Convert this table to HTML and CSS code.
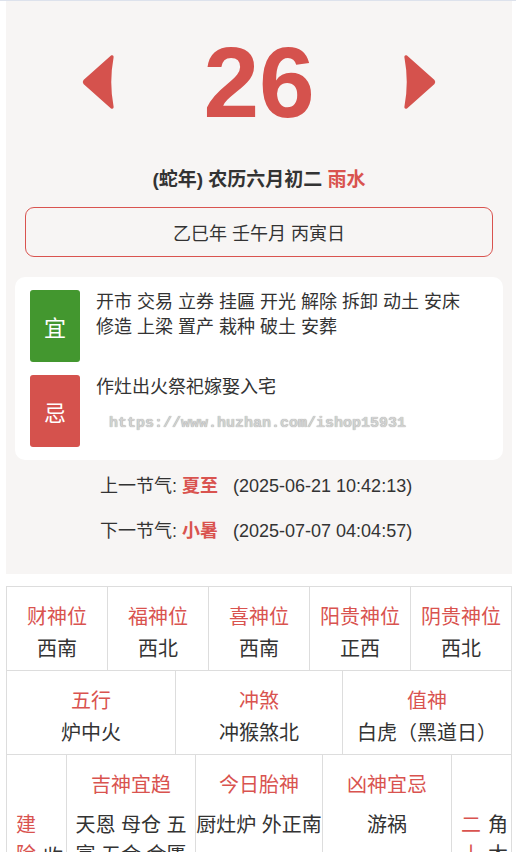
FILE: index.html
```html
<!DOCTYPE html>
<html lang="zh-CN">
<head>
<meta charset="utf-8">
<title>黄历</title>
<link rel="stylesheet" href="styles.css">
</head>
<body>
<div class="topbar"></div>
<main class="page">
  <section class="day-card">
    <div class="day-row">
      <svg class="arrow" viewBox="0 0 32 56" width="32" height="56"><path d="M29 1.5 C31 0.5 32 2 31.5 4 Q27 28 31.5 52 C32 54 31 55.5 29 54.5 L1.5 30 Q0 28 1.5 26 Z"/></svg>
      <div class="day-num">26</div>
      <svg class="arrow" viewBox="0 0 32 56" width="32" height="56"><path d="M3 1.5 C1 0.5 0 2 0.5 4 Q5 28 0.5 52 C0 54 1 55.5 3 54.5 L30.5 30 Q32 28 30.5 26 Z"/></svg>
    </div>
    <div class="lunar">(蛇年) 农历六月初二 <span class="red">雨水</span></div>
    <div class="ganzhi">乙巳年 壬午月 丙寅日</div>
    <div class="yiji">
      <div class="yj-row">
        <div class="yj-tag yi">宜</div>
        <div class="yj-text">开市 交易 立券 挂匾 开光 解除 拆卸 动土 安床 修造 上梁 置产 栽种 破土 安葬</div>
      </div>
      <div class="yj-row">
        <div class="yj-tag ji">忌</div>
        <div class="yj-text">作灶出火祭祀嫁娶入宅<div class="wm">https://www.huzhan.com/ishop15931</div></div>
      </div>
    </div>
    <div class="jieqi">
      <p>上一节气: <b>夏至</b><span class="time">(2025-06-21 10:42:13)</span></p>
      <p>下一节气: <b>小暑</b><span class="time">(2025-07-07 04:04:57)</span></p>
    </div>
  </section>

  <section class="info">
    <div class="row r5">
      <div class="cell"><div class="hd">财神位</div><div class="val">西南</div></div>
      <div class="cell"><div class="hd">福神位</div><div class="val">西北</div></div>
      <div class="cell"><div class="hd">喜神位</div><div class="val">西南</div></div>
      <div class="cell"><div class="hd">阳贵神位</div><div class="val">正西</div></div>
      <div class="cell"><div class="hd">阴贵神位</div><div class="val">西北</div></div>
    </div>
    <div class="row r3">
      <div class="cell"><div class="hd">五行</div><div class="val">炉中火</div></div>
      <div class="cell"><div class="hd">冲煞</div><div class="val">冲猴煞北</div></div>
      <div class="cell"><div class="hd">值神</div><div class="val">白虎（黑道日）</div></div>
    </div>
    <div class="row rlast">
      <div class="cell vcell">
        <span class="vcol red">建除十二神</span><span class="vcol low">收日</span>
      </div>
      <div class="cell tall"><div class="hd">吉神宜趋</div><div class="val2">天恩 母仓 五富 五合 金匮</div></div>
      <div class="cell tall"><div class="hd">今日胎神</div><div class="val2 tight">厨灶炉 外正南</div></div>
      <div class="cell tall"><div class="hd">凶神宜忌</div><div class="val2">游祸</div></div>
      <div class="cell vcell">
        <span class="vcol red">二十八宿</span><span class="vcol">角木蛟</span>
      </div>
    </div>
  </section>
</main>
</body>
</html>
```

FILE: styles.css
```css
* { box-sizing: border-box; }

html, body {
  margin: 0;
  padding: 0;
  background: #ffffff;
  color: #333333;
  font-family: "Liberation Sans", "Noto Sans CJK SC", sans-serif;
}

.topbar {
  height: 1px;
  background: #dde2ec;
}

.page {
  width: 506px;
  margin-left: 6px;
}

.red { color: #d9534f; }

/* ---------- day card ---------- */
.day-card {
  background: #f7f5f4;
  padding: 31px 0 20px;
}

.day-row {
  display: flex;
  justify-content: center;
  align-items: center;
  gap: 89px;
}

.arrow { display: block; }
.arrow path { fill: #d5524d; }

.day-num {
  font-family: "Liberation Sans", sans-serif;
  font-weight: 700;
  font-size: 100px;
  line-height: 100px;
  color: #d5524d;
}

.lunar {
  margin-top: 34px;
  text-align: center;
  font-size: 19px;
  font-weight: 700;
  line-height: 28px;
  color: #333;
}

.ganzhi {
  margin: 13px 19px 0;
  height: 50px;
  border: 1px solid #d9534f;
  border-radius: 9px;
  text-align: center;
  line-height: 52px;
  font-size: 18px;
  color: #333;
}

.yiji {
  margin: 20px 9px 0;
  background: #ffffff;
  border-radius: 10px;
  padding: 13px 15px;
  display: flex;
  flex-direction: column;
  gap: 13px;
}

.yj-row {
  display: flex;
  align-items: flex-start;
  gap: 16px;
}

.yj-tag {
  flex: 0 0 50px;
  height: 72px;
  border-radius: 3px;
  color: #fff;
  font-size: 22px;
  display: flex;
  align-items: center;
  justify-content: center;
}

.yj-tag.yi { background: #43972f; }
.yj-tag.ji { background: #d5524d; }

.yj-text {
  flex: 1;
  font-size: 18px;
  line-height: 25px;
  color: #333;
  padding-right: 20px;
}

.wm {
  margin-top: 14px;
  margin-left: 13px;
  font-family: "Liberation Mono", monospace;
  font-size: 15px;
  font-weight: 700;
  line-height: 20px;
  color: #d2d2d2;
  text-shadow: 0 0 1px #8a8a8a;
}

.jieqi {
  margin-top: 4px;
  padding-left: 94px;
}

.jieqi p {
  margin: 0;
  font-size: 18px;
  line-height: 45px;
  color: #333;
}

.jieqi b {
  color: #d9534f;
  font-weight: 700;
}

.jieqi .time { margin-left: 15px; }

/* ---------- info table ---------- */
.info {
  margin-top: 12px;
  border-top: 1px solid #dddddd;
  border-left: 1px solid #dddddd;
}

.row { display: grid; }
.r5 { grid-template-columns: repeat(5, 1fr); }
.r3 { grid-template-columns: 169px 167px 1fr; }
.rlast { grid-template-columns: 60px 129px 127px 129px 1fr; }

.cell {
  border-right: 1px solid #dddddd;
  border-bottom: 1px solid #dddddd;
  text-align: center;
  font-size: 20px;
  padding: 15px 0 4px;
  height: 84px;
}

.hd {
  color: #d9534f;
  line-height: 30px;
}

.val {
  color: #333;
  line-height: 34px;
}

.rlast .cell { height: 160px; }

.tall .val2 {
  margin-top: 10px;
  line-height: 30px;
  color: #333;
  padding: 0 8px;
}

.tall .val2.tight {
  padding: 0;
  white-space: nowrap;
}

.vcell {
  display: flex;
  align-items: flex-start;
  gap: 7px;
  padding: 55px 0 0 9px;
  text-align: left;
}

.vcol {
  width: 20px;
  line-height: 30px;
  word-break: break-all;
  color: #333;
}

.vcol.red { color: #d9534f; }
.vcol.low { margin-top: 32px; }
```
